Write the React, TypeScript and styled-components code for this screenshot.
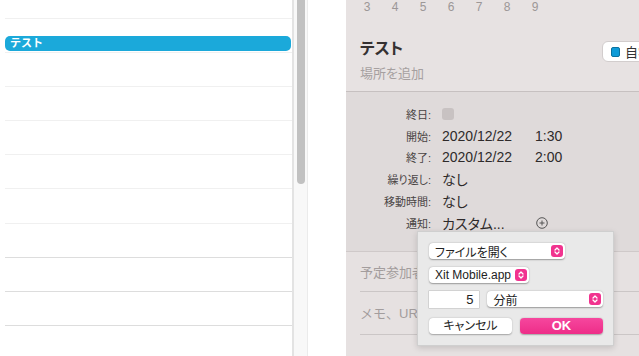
import styled, { createGlobalStyle } from 'styled-components';

const GlobalStyle = createGlobalStyle`
    html, body {
        margin: 0;
        padding: 0;
        background: #ffffff;
    }
    body {
        font-family: "Liberation Sans", "Noto Sans CJK JP", sans-serif;
        color: #2e2a2a;
    }
`;

const Window = styled.div`
    display: flex;
    width: 639px;
    height: 356px;
    overflow: hidden;
    background: #ffffff;
`;

// left: month list
const ListPane = styled.div`
    display: flex;
    width: 308px;
    height: 100%;
    flex-shrink: 0;
`;

const DayList = styled.div`
    width: 292px;
    padding-left: 5px;
    box-sizing: border-box;
    display: flex;
    flex-direction: column;
`;

const DayRow = styled.div<{ $h: number; $dim?: boolean }>`
    height: ${p => p.$h}px;
    flex-shrink: 0;
    border-bottom: 1px solid ${p => p.$dim ? '#dddddd' : '#f0f0f0'};
    display: flex;
    flex-direction: column;
    justify-content: flex-end;
`;

const EventBar = styled.div`
    height: 15px;
    margin: 0 1px 1px 0;
    border-radius: 5px;
    background: #1ba9da;
    color: #ffffff;
    font-size: 11px;
    font-weight: bold;
    line-height: 15px;
    padding-left: 5px;
`;

const ScrollTrack = styled.div`
    width: 13px;
    height: 100%;
    background: #f8f8f8;
    border-left: 2px solid #e3e3e3;
    border-right: 1px solid #ebebeb;
`;

const Thumb = styled.div`
    width: 8px;
    height: 184px;
    margin-left: 3px;
    background: #c1c1c1;
    border-radius: 0 0 4px 4px;
`;

const Gutter = styled.div`
    width: 38px;
    flex-shrink: 0;
    background: #ffffff;
`;

// right: event detail
const Detail = styled.div`
    position: relative;
    flex: 1;
    height: 100%;
    overflow: hidden;
    display: flex;
    flex-direction: column;
    background: #e6e1e1;
    font-feature-settings: "palt";
`;

const TopSection = styled.div`
    background: #e7e2e2;
    padding: 0 0 8px 14px;
    border-bottom: 1px solid #c6c0c0;
`;

const WeekNums = styled.div`
    display: flex;
    margin-left: -7px;
    height: 14px;
    font-size: 12px;
    line-height: 14px;
    color: #9c9797;
`;

const WeekNum = styled.span`
    width: 28px;
    text-align: center;
`;

const TitleRow = styled.div`
    display: grid;
    grid-template-columns: 242px auto;
    align-items: start;
    height: 20px;
    margin-top: 25px;
`;

const Title = styled.div`
    font-size: 16px;
    font-weight: bold;
    line-height: 20px;
    color: #353131;
`;

const CalendarPill = styled.div`
    display: flex;
    align-items: center;
    gap: 5px;
    width: 70px;
    height: 21px;
    margin-top: 2px;
    padding-left: 8px;
    box-sizing: border-box;
    background: #ffffff;
    border: 1px solid #d2cdcd;
    border-radius: 6px;
    font-size: 13px;
    color: #333;
    white-space: nowrap;
`;

const Swatch = styled.span`
    width: 7px;
    height: 8px;
    border-radius: 2px;
    background: #0e9bd8;
    border: 1px solid #0b72a0;
`;

const Location = styled.div`
    font-size: 13px;
    line-height: 18px;
    margin-top: 6px;
    color: #a6a0a0;
`;

const InfoSection = styled.div`
    background: #dfdada;
    padding: 11px 0 17px;
    border-bottom: 1px solid #cfc9c9;
`;

const InfoRow = styled.div`
    display: grid;
    grid-template-columns: 85px auto;
    column-gap: 11px;
    align-items: center;
    height: 21.8px;
`;

const Label = styled.span`
    text-align: right;
    font-size: 11px;
    color: #4a4545;
`;

const Value = styled.span`
    display: flex;
    align-items: center;
    font-size: 14px;
    color: #2e2a2a;
`;

const DatePart = styled.span`
    width: 93px;
`;

const Check = styled.span`
    width: 12px;
    height: 12px;
    border-radius: 3px;
    background: #c8c2c2;
`;

const PlusIcon = styled.svg`
    margin-left: 31px;
`;

const ExtraSection = styled.div`
    padding-left: 14px;
`;

const ExtraRow = styled.div<{ $h: number }>`
    height: ${p => p.$h}px;
    display: flex;
    align-items: center;
    border-bottom: 1px solid #cbc6c6;
    font-size: 13px;
    font-feature-settings: normal;
    color: #a39d9d;
    white-space: nowrap;
`;

// notification popover
const Popover = styled.div`
    position: absolute;
    left: 71px;
    top: 231px;
    width: 197px;
    box-sizing: border-box;
    padding: 11px 10px 11px 11px;
    display: flex;
    flex-direction: column;
    gap: 8px;
    background: #e9e9e9;
    border: 1px solid #cfcfcf;
    box-shadow: 0 2px 6px rgba(0, 0, 0, 0.15);
    font-size: 12px;
    color: #222;
`;

const PopRow = styled.div<{ $top?: number }>`
    display: flex;
    gap: 8px;
    margin-top: ${p => p.$top ?? 0}px;
`;

const Select = styled.div<{ $w: number }>`
    width: ${p => p.$w}px;
    height: 16px;
    box-sizing: border-box;
    display: flex;
    align-items: center;
    justify-content: space-between;
    padding: 0 2px 0 6px;
    background: #ffffff;
    border-radius: 4px;
    box-shadow: 0 0.5px 1.5px rgba(0, 0, 0, 0.35);
    white-space: nowrap;
`;

const NumberField = styled.div`
    width: 51px;
    height: 17px;
    box-sizing: border-box;
    padding-right: 6px;
    text-align: right;
    line-height: 17px;
    background: #ffffff;
    box-shadow: 0 0 0 0.5px rgba(0, 0, 0, 0.2);
    font-size: 13px;
`;

const Button = styled.div<{ $primary?: boolean }>`
    width: 84px;
    height: 16px;
    border-radius: 4px;
    text-align: center;
    line-height: 16px;
    background: ${p => p.$primary ? 'linear-gradient(#f6479e, #ee2d88)' : '#ffffff'};
    color: ${p => p.$primary ? '#ffffff' : '#222'};
    font-weight: ${p => p.$primary ? 'bold' : 'normal'};
    font-size: ${p => p.$primary ? '13px' : '12px'};
    box-shadow: 0 0.5px 1.5px rgba(0, 0, 0, 0.3);
`;

const Stepper = () => (
    <svg width="12" height="12" viewBox="0 0 12 12">
        <rect width="12" height="12" rx="3" fill="#f1338f" />
        <path d="M4 5 L6 3 L8 5 M4 7 L6 9 L8 7" stroke="#fff" strokeWidth="1.3" fill="none" strokeLinecap="round" strokeLinejoin="round" />
    </svg>
);

const rows = [
    { h: 18 }, { h: 33.1, event: true }, { h: 33.1 }, { h: 33.1 }, { h: 33.1 },
    { h: 33.1 }, { h: 33.1 }, { h: 33.1, dim: true }, { h: 33.1, dim: true }, { h: 33.1, dim: true },
];

const App = () => {
    return (
        <Window>
            <GlobalStyle />
            <ListPane>
                <DayList>
                    {rows.map((r, i) => (
                        <DayRow key={`row-${i}`} $h={r.h} $dim={r.dim}>
                            {r.event && <EventBar>テスト</EventBar>}
                        </DayRow>
                    ))}
                </DayList>
                <ScrollTrack>
                    <Thumb />
                </ScrollTrack>
            </ListPane>
            <Gutter />
            <Detail>
                <TopSection>
                    <WeekNums>
                        {['3', '4', '5', '6', '7', '8', '9'].map(n => (
                            <WeekNum key={n}>{n}</WeekNum>
                        ))}
                    </WeekNums>
                    <TitleRow>
                        <Title>テスト</Title>
                        <CalendarPill>
                            <Swatch />
                            自宅
                        </CalendarPill>
                    </TitleRow>
                    <Location>場所を追加</Location>
                </TopSection>
                <InfoSection>
                    <InfoRow>
                        <Label>終日:</Label>
                        <Value><Check /></Value>
                    </InfoRow>
                    <InfoRow>
                        <Label>開始:</Label>
                        <Value><DatePart>2020/12/22</DatePart>1:30</Value>
                    </InfoRow>
                    <InfoRow>
                        <Label>終了:</Label>
                        <Value><DatePart>2020/12/22</DatePart>2:00</Value>
                    </InfoRow>
                    <InfoRow>
                        <Label>繰り返し:</Label>
                        <Value>なし</Value>
                    </InfoRow>
                    <InfoRow>
                        <Label>移動時間:</Label>
                        <Value>なし</Value>
                    </InfoRow>
                    <InfoRow>
                        <Label>通知:</Label>
                        <Value>
                            カスタム...
                            <PlusIcon width="12" height="12" viewBox="0 0 12 12">
                                <circle cx="6" cy="6" r="5.3" stroke="#555" strokeWidth="1" fill="none" />
                                <path d="M6 3.5 V8.5 M3.5 6 H8.5" stroke="#555" strokeWidth="1" />
                            </PlusIcon>
                        </Value>
                    </InfoRow>
                </InfoSection>
                <ExtraSection>
                    <ExtraRow $h={39}>予定参加者を追加</ExtraRow>
                    <ExtraRow $h={42}>メモ、URL、または添付ファイルを追加</ExtraRow>
                </ExtraSection>
                <Popover>
                    <PopRow>
                        <Select $w={136}>ファイルを開く<Stepper /></Select>
                    </PopRow>
                    <PopRow>
                        <Select $w={100}>Xit Mobile.app<Stepper /></Select>
                    </PopRow>
                    <PopRow>
                        <NumberField>5</NumberField>
                        <Select $w={117}>分前<Stepper /></Select>
                    </PopRow>
                    <PopRow $top={2}>
                        <Button>キャンセル</Button>
                        <Button $primary>OK</Button>
                    </PopRow>
                </Popover>
            </Detail>
        </Window>
    );
};

export default App;
